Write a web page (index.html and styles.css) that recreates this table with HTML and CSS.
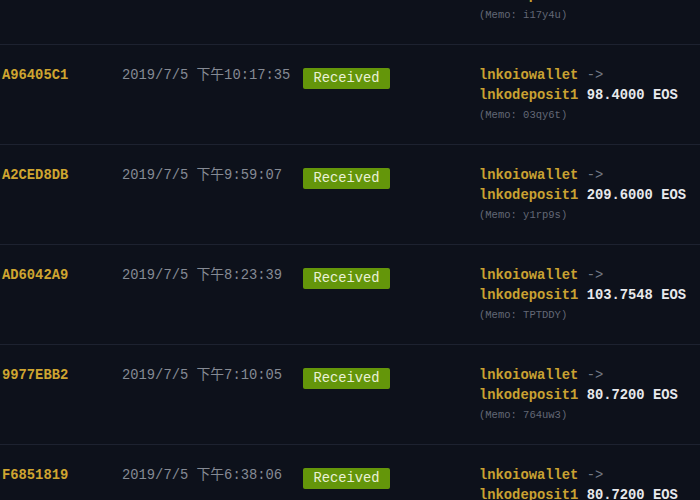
FILE: index.html
```html
<!DOCTYPE html>
<html lang="zh-TW">
<head>
  <meta charset="UTF-8">
  <meta name="viewport" content="width=device-width, initial-scale=1.0">
  <title>Transactions</title>
  <link rel="stylesheet" href="styles.css">
</head>
<body>
  <!-- Lista de transacciones (desplazada, la primera fila queda cortada) -->
  <div class="tx-list">
    <div class="tx-row">
      <span class="tx-id">B17C90E4</span>
      <span class="tx-date">2019/7/5 下午10:42:18</span>
      <span><span class="badge">Received</span></span>
      <div class="tx-info">
        <div><span class="addr">lnkoiowallet</span> <span class="arrow">-&gt;</span></div>
        <div><span class="addr">lnkodeposit1</span> <span class="amount">150.0000 EOS</span></div>
        <div class="memo">(Memo: i17y4u)</div>
      </div>
    </div>

    <div class="tx-row">
      <span class="tx-id">A96405C1</span>
      <span class="tx-date">2019/7/5 下午10:17:35</span>
      <span><span class="badge">Received</span></span>
      <div class="tx-info">
        <div><span class="addr">lnkoiowallet</span> <span class="arrow">-&gt;</span></div>
        <div><span class="addr">lnkodeposit1</span> <span class="amount">98.4000 EOS</span></div>
        <div class="memo">(Memo: 03qy6t)</div>
      </div>
    </div>

    <div class="tx-row">
      <span class="tx-id">A2CED8DB</span>
      <span class="tx-date">2019/7/5 下午9:59:07</span>
      <span><span class="badge">Received</span></span>
      <div class="tx-info">
        <div><span class="addr">lnkoiowallet</span> <span class="arrow">-&gt;</span></div>
        <div><span class="addr">lnkodeposit1</span> <span class="amount">209.6000 EOS</span></div>
        <div class="memo">(Memo: y1rp9s)</div>
      </div>
    </div>

    <div class="tx-row">
      <span class="tx-id">AD6042A9</span>
      <span class="tx-date">2019/7/5 下午8:23:39</span>
      <span><span class="badge">Received</span></span>
      <div class="tx-info">
        <div><span class="addr">lnkoiowallet</span> <span class="arrow">-&gt;</span></div>
        <div><span class="addr">lnkodeposit1</span> <span class="amount">103.7548 EOS</span></div>
        <div class="memo">(Memo: TPTDDY)</div>
      </div>
    </div>

    <div class="tx-row">
      <span class="tx-id">9977EBB2</span>
      <span class="tx-date">2019/7/5 下午7:10:05</span>
      <span><span class="badge">Received</span></span>
      <div class="tx-info">
        <div><span class="addr">lnkoiowallet</span> <span class="arrow">-&gt;</span></div>
        <div><span class="addr">lnkodeposit1</span> <span class="amount">80.7200 EOS</span></div>
        <div class="memo">(Memo: 764uw3)</div>
      </div>
    </div>

    <div class="tx-row">
      <span class="tx-id">F6851819</span>
      <span class="tx-date">2019/7/5 下午6:38:06</span>
      <span><span class="badge">Received</span></span>
      <div class="tx-info">
        <div><span class="addr">lnkoiowallet</span> <span class="arrow">-&gt;</span></div>
        <div><span class="addr">lnkodeposit1</span> <span class="amount">80.7200 EOS</span></div>
        <div class="memo">(Memo: k3v8qa)</div>
      </div>
    </div>
  </div>
</body>
</html>
```

FILE: styles.css
```css
html, body {
  background: #0d111b;
}
body {
  margin: 0;
  font-family: "Liberation Mono", "Noto Sans CJK TC", monospace;
  font-size: 13.8px;
  line-height: 20px;
  color: #8b8f98;
  overflow: hidden;
}
.tx-list {
  margin-top: -56px; /* lista desplazada hacia arriba */
}
.tx-row {
  display: grid;
  grid-template-columns: 120px 181px 176px 1fr;
  align-items: start;
  padding: 21px 0 20px 2px;
  border-top: 1px solid #1d2230;
  white-space: nowrap;
}
.tx-id {
  color: #cfa530;
  font-weight: bold;
}
.tx-date {
  color: #858a94;
}
.badge {
  display: inline-block;
  margin-top: 2px;
  width: 87px;
  height: 21px;
  line-height: 21px;
  text-align: center;
  background: #64960a;
  color: #e9f1d6;
  border-radius: 2px;
}
.addr {
  color: #c9a232;
  font-weight: bold;
}
.arrow {
  color: #737884;
}
.amount {
  color: #e8e9ec;
  font-weight: bold;
}
.memo {
  margin-top: 1px;
  font-size: 10.5px;
  line-height: 17px;
  color: #636876;
}
```
